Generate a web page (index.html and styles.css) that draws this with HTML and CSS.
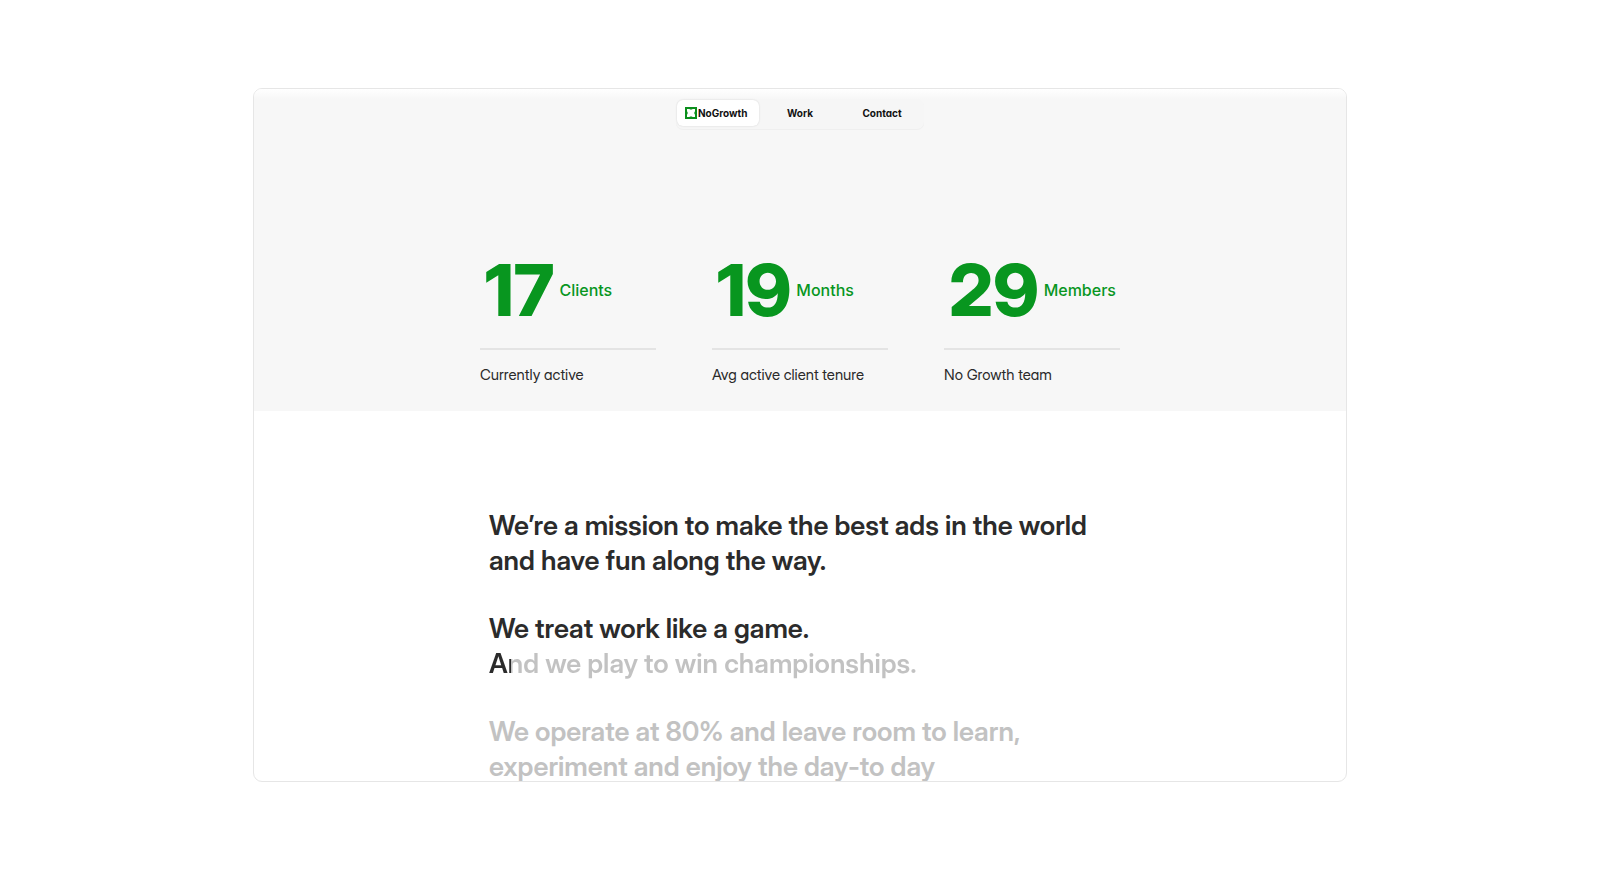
FILE: index.html
```html
<!DOCTYPE html>
<html lang="en">
<head>
  <meta charset="UTF-8" />
  <meta name="viewport" content="width=device-width, initial-scale=1" />
  <title>NoGrowth</title>
  <link rel="stylesheet" href="styles.css">
</head>
<body>
  <div class="frame">
    <header class="hero">
      <nav class="nav">
        <a class="nav-link active" href="#">
          <svg class="logo" viewBox="0 0 12 12" aria-hidden="true">
            <rect width="12" height="12" fill="#0b8f1c" />
            <path d="M2 2 H4.5 L5 2.6 H7 L7.5 2 H10 V4.5 L9.4 5 V7 L10 7.5 V10 H7.5 L7 9.4 H5 L4.5 10 H2 V7.5 L2.6 7 V5 L2 4.5 Z" fill="#fff" />
          </svg>
          NoGrowth
        </a>
        <a class="nav-link" href="#work">Work</a>
        <a class="nav-link" href="#contact">Contact</a>
      </nav>

      <section class="stats">
        <div class="stat">
          <div class="stat-value"><strong>17</strong><span>Clients</span></div>
          <p class="stat-note">Currently active</p>
        </div>
        <div class="stat">
          <div class="stat-value"><strong>19</strong><span>Months</span></div>
          <p class="stat-note">Avg active client tenure</p>
        </div>
        <div class="stat">
          <div class="stat-value"><strong>29</strong><span>Members</span></div>
          <p class="stat-note">No Growth team</p>
        </div>
      </section>
    </header>

    <main class="mission">
      <p>We’re a mission to make the best ads in the world<br>and have fun along the way.</p>
      <p>We treat work like a game.<br><span class="revealing">And we play to win championships.</span></p>
      <p class="muted">We operate at 80% and leave room to learn,<br>experiment and enjoy the day-to day</p>
    </main>
  </div>
</body>
</html>
```

FILE: styles.css
```css
* {
  box-sizing: border-box;
}

body {
  margin: 0;
  padding: 88px 24px;
  background: #fff;
  color: #2b2b2b;
  font-family: Inter, "Liberation Sans", sans-serif;
}

.frame {
  max-width: 1094px;
  height: calc(100vh - 176px);
  margin: 0 auto;
  border: 1px solid #e6e6e6;
  border-radius: 9px;
  overflow: hidden;
}

.hero {
  padding: 10px 24px 26px;
  background: linear-gradient(#fff, #f7f7f7 10px);
}

/* top navigation */
.nav {
  display: grid;
  grid-template-columns: repeat(3, 1fr);
  max-width: 248px;
  margin: 0 auto;
  padding: 1px 1px 3px;
  border-radius: 7px;
  background: #f6f6f6;
  box-shadow: 0 1px 0 #efefef;
}

.nav-link {
  display: flex;
  align-items: center;
  justify-content: center;
  height: 26px;
  border-radius: 6px;
  color: #111;
  font-size: 10px;
  font-weight: 700;
  font-feature-settings: "cv11";
  text-decoration: none;
}

.nav-link.active {
  justify-content: flex-start;
  gap: 1px;
  padding-left: 8px;
  background: #fff;
  box-shadow: 0 0 2px rgba(0, 0, 0, 0.15);
}

.logo {
  width: 12px;
  height: 12px;
}

/* stats */
.stats {
  display: grid;
  grid-template-columns: repeat(3, minmax(0, 1fr));
  gap: 56px;
  max-width: 640px;
  margin: 119px auto 0;
  font-feature-settings: "cv11";
}

.stat-value {
  display: flex;
  align-items: center;
  gap: 5px;
  height: 102px;
  padding: 0 0 16px 5px;
  border-bottom: 2px solid #e4e4e4;
  color: #08961f;
}

.stat-value strong {
  font-family: "Inter Display", Inter, sans-serif;
  font-size: 72px;
  font-weight: 800;
  line-height: 80px;
}

.stat-value span {
  font-size: 16px;
  font-weight: 500;
}

.stat-note {
  margin: 15px 0 0;
  font-family: "Inter Display", Inter, sans-serif;
  font-size: 15px;
  line-height: 20px;
}

/* mission text */
.mission {
  max-width: 622px;
  margin: 97px auto 0;
  font-family: "Inter Display", Inter, "Liberation Sans", sans-serif;
  font-size: 27px;
  font-weight: 600;
  line-height: 35px;
  white-space: nowrap;
}

.mission p {
  margin: 0 0 33px;
}

.muted {
  color: #c2c2c2;
}

/* text is filled in from the left */
.revealing {
  background: linear-gradient(90deg, #2b2b2b 22px, #c2c2c2 22px);
  background-clip: text;
  -webkit-background-clip: text;
  color: transparent;
}
```
